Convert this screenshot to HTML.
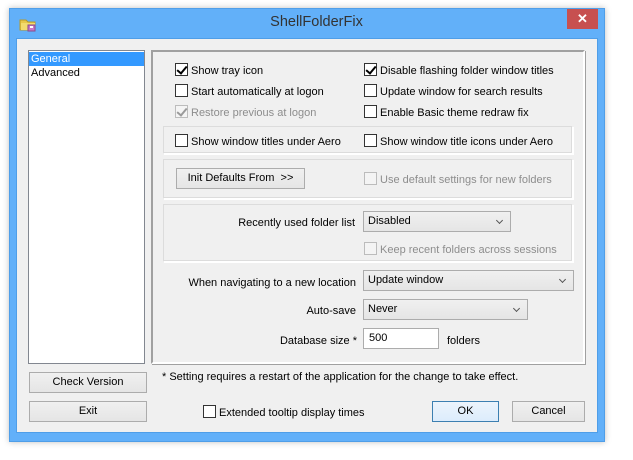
<!DOCTYPE html>
<html><head><style>
*{box-sizing:border-box;margin:0;padding:0}
body{width:633px;height:460px;background:#fff;font-family:"Liberation Sans",sans-serif;font-size:11px;color:#000;position:relative;overflow:hidden}
.a{position:absolute}
.win{left:9px;top:8px;width:596px;height:434px;background:#62b0f9;border:1px solid #4f9ee8;box-shadow:0 0 6px rgba(0,0,0,.25)}
.client{left:16px;top:38px;width:582px;height:395px;background:#f0f0f0;border:1px solid #4f9ee8}
.title{left:0;top:14px;width:633px;text-align:center;font-size:14.5px;color:#333}
.close{left:567px;top:9px;width:31px;height:20px;background:#c75050;color:#fff;text-align:center;font-size:13px;line-height:20px;font-weight:bold}
.cb{width:13px;height:13px;border:1px solid #333;background:#fff}
.cb.dis{border-color:#bcbcbc;background:#f4f4f4}
.lbl{white-space:nowrap;line-height:14px}
.dis-t{color:#8d8d8d}
.grp{border:1px solid #dcdcdc;border-right-color:#fff;border-bottom-color:#fff;box-shadow:inset -1px -1px 0 #dcdcdc,1px 1px 0 #fff}
.btn{background:linear-gradient(#f0f0f0,#e5e5e5);border:1px solid #acacac;text-align:center;line-height:19px;white-space:nowrap}
.combo{background:linear-gradient(#f0f0f0,#e5e5e5);border:1px solid #acacac;line-height:19px;padding-left:4px}
.combo::after{content:"";position:absolute;right:8px;top:6px;width:4px;height:4px;border-right:1.5px solid #555;border-bottom:1.5px solid #555;transform:rotate(45deg)}
.chk::after{content:"";position:absolute;left:3px;top:0px;width:4px;height:8px;border-right:2px solid #000;border-bottom:2px solid #000;transform:rotate(40deg)}
.chk.dis::after{border-color:#9a9a9a}
</style></head><body>
<div class="a win"></div>
<div class="a title">ShellFolderFix</div>
<div class="a close">✕</div>
<svg class="a" style="left:19px;top:16px" width="18" height="16" viewBox="0 0 18 16"><path d="M1 4h6l2 2h7v8H1z" fill="#e8c84a" stroke="#b89a2a"/><path d="M2 7h14v7H2z" fill="#f3dc6e"/><rect x="9" y="9" width="7" height="6" fill="#c878c8" stroke="#8a4a8a"/><rect x="11" y="10" width="3" height="2" fill="#fff"/></svg>
<div class="a client"></div>

<div class="a" style="left:28px;top:50px;width:117px;height:314px;background:#fff;border:1px solid #828790"></div>
<div class="a lbl" style="left:29px;top:52px;width:115px;height:14px;background:#3399ff;color:#fff;padding-left:2px">General</div>
<div class="a lbl" style="left:31px;top:66px">Advanced</div>

<div class="a" style="left:151px;top:50px;width:434px;height:314px;border:2px solid #a0a0a0;border-right-color:#fff;border-bottom-color:#fff;box-shadow:1px 1px 0 #a0a0a0"></div>

<div class="a cb chk" style="left:175px;top:63px"></div><div class="a lbl" style="left:191px;top:64px">Show tray icon</div>
<div class="a cb" style="left:175px;top:84px"></div><div class="a lbl" style="left:191px;top:85px">Start automatically at logon</div>
<div class="a cb chk dis" style="left:175px;top:105px"></div><div class="a lbl dis-t" style="left:191px;top:106px">Restore previous at logon</div>
<div class="a cb chk" style="left:364px;top:63px"></div><div class="a lbl" style="left:380px;top:64px">Disable flashing folder window titles</div>
<div class="a cb" style="left:364px;top:84px"></div><div class="a lbl" style="left:380px;top:85px">Update window for search results</div>
<div class="a cb" style="left:364px;top:105px"></div><div class="a lbl" style="left:380px;top:106px">Enable Basic theme redraw fix</div>

<div class="a grp" style="left:163px;top:126px;width:410px;height:28px"></div>
<div class="a cb" style="left:175px;top:134px"></div><div class="a lbl" style="left:191px;top:135px">Show window titles under Aero</div>
<div class="a cb" style="left:364px;top:134px"></div><div class="a lbl" style="left:380px;top:135px">Show window title icons under Aero</div>

<div class="a grp" style="left:163px;top:159px;width:410px;height:40px"></div>
<div class="a btn" style="left:176px;top:168px;width:129px;height:21px">Init Defaults From &nbsp;&gt;&gt;</div>
<div class="a cb dis" style="left:364px;top:172px"></div><div class="a lbl dis-t" style="left:380px;top:173px">Use default settings for new folders</div>

<div class="a grp" style="left:163px;top:204px;width:410px;height:58px"></div>
<div class="a lbl" style="left:160px;top:216px;width:195px;text-align:right">Recently used folder list</div>
<div class="a combo" style="left:363px;top:211px;width:148px;height:21px">Disabled</div>
<div class="a cb dis" style="left:364px;top:242px"></div><div class="a lbl dis-t" style="left:380px;top:243px">Keep recent folders across sessions</div>

<div class="a lbl" style="left:160px;top:276px;width:196px;text-align:right">When navigating to a new location</div>
<div class="a combo" style="left:363px;top:270px;width:211px;height:21px">Update window</div>
<div class="a lbl" style="left:160px;top:304px;width:196px;text-align:right">Auto-save</div>
<div class="a combo" style="left:363px;top:299px;width:165px;height:21px">Never</div>
<div class="a lbl" style="left:160px;top:334px;width:197px;text-align:right">Database size *</div>
<div class="a" style="left:363px;top:328px;width:76px;height:21px;background:#fff;border:1px solid #acacac;padding:3px 0 0 5px">500</div>
<div class="a lbl" style="left:447px;top:334px">folders</div>

<div class="a btn" style="left:29px;top:372px;width:118px;height:21px">Check Version</div>
<div class="a lbl" style="left:162px;top:370px">* Setting requires a restart of the application for the change to take effect.</div>
<div class="a btn" style="left:29px;top:401px;width:118px;height:21px">Exit</div>
<div class="a cb" style="left:203px;top:405px"></div><div class="a lbl" style="left:219px;top:406px">Extended tooltip display times</div>
<div class="a btn" style="left:432px;top:401px;width:67px;height:21px;border-color:#3c7fb1;background:linear-gradient(#ecf4fc,#dcecfc)">OK</div>
<div class="a btn" style="left:512px;top:401px;width:73px;height:21px">Cancel</div>
</body></html>
